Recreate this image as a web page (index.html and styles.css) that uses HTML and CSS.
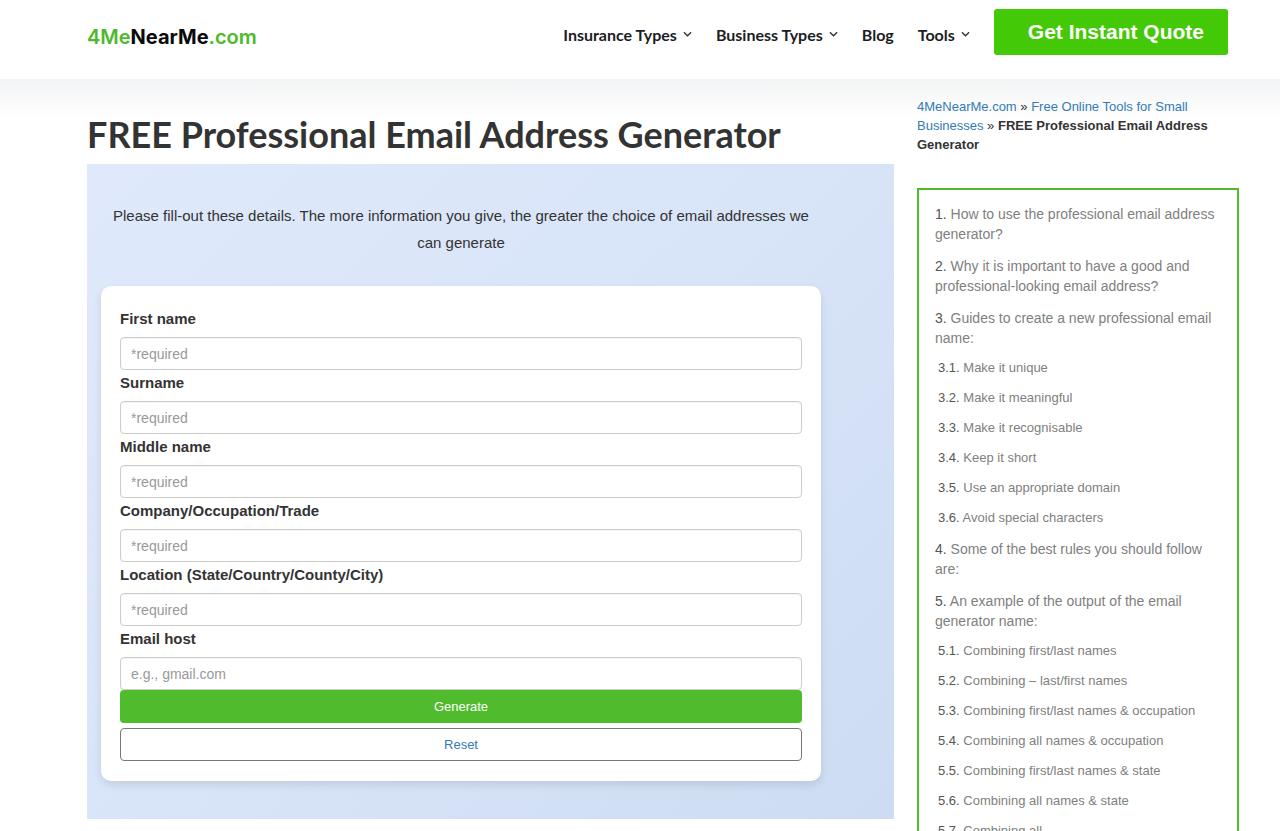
FILE: index.html
```
<!DOCTYPE html>
<html lang="en">
<head>
    <meta charset="UTF-8">
    <meta name="viewport" content="width=device-width, initial-scale=1.0">
    <title>FREE Professional Email Address Generator</title>
    <link rel="stylesheet" href="styles.css">
</head>
<body>
    <header class="site-header">
        <a class="logo" href="#">4Me<span class="logo-dark">NearMe</span><span class="logo-tld">.com</span></a>
        <nav class="main-nav">
            <a href="#">Insurance Types <svg class="caret" viewBox="0 0 10 6"><path d="M1 1l4 4 4-4"/></svg></a>
            <a href="#">Business Types <svg class="caret" viewBox="0 0 10 6"><path d="M1 1l4 4 4-4"/></svg></a>
            <a href="#">Blog</a>
            <a href="#">Tools <svg class="caret" viewBox="0 0 10 6"><path d="M1 1l4 4 4-4"/></svg></a>
            <a class="quote-btn" href="#">Get Instant Quote</a>
        </nav>
    </header>

    <div class="page">
        <main class="content">
            <h1>FREE Professional Email Address Generator</h1>
            <section class="generator">
                <div class="generator-inner">
                    <p class="intro">Please fill-out these details. The more information you give, the greater the choice of email addresses we can generate</p>
                    <form class="card" id="emailForm">
                        <div class="form-group">
                            <label for="firstName">First name</label>
                            <input type="text" id="firstName" placeholder="*required">
                        </div>
                        <div class="form-group">
                            <label for="surname">Surname</label>
                            <input type="text" id="surname" placeholder="*required">
                        </div>
                        <div class="form-group">
                            <label for="middleName">Middle name</label>
                            <input type="text" id="middleName" placeholder="*required">
                        </div>
                        <div class="form-group">
                            <label for="company">Company/Occupation/Trade</label>
                            <input type="text" id="company" placeholder="*required">
                        </div>
                        <div class="form-group">
                            <label for="location">Location (State/Country/County/City)</label>
                            <input type="text" id="location" placeholder="*required">
                        </div>
                        <div class="form-group">
                            <label for="host">Email host</label>
                            <input type="text" id="host" placeholder="e.g., gmail.com">
                        </div>
                        <button type="button" class="btn btn-generate">Generate</button>
                        <button type="reset" class="btn btn-reset">Reset</button>
                    </form>
                </div>
            </section>
        </main>

        <aside class="sidebar">
            <nav class="breadcrumb">
                <a href="#">4MeNearMe.com</a> » <a href="#">Free Online Tools for Small Businesses</a> » <strong>FREE Professional Email Address Generator</strong>
            </nav>
            <nav class="toc">
                <ul>
                    <li><a href="#"><span>1.</span> How to use the professional email address generator?</a></li>
                    <li><a href="#"><span>2.</span> Why it is important to have a good and professional-looking email address?</a></li>
                    <li><a href="#"><span>3.</span> Guides to create a new professional email name:</a>
                        <ul class="toc-sub">
                            <li><a href="#"><span>3.1.</span> Make it unique</a></li>
                            <li><a href="#"><span>3.2.</span> Make it meaningful</a></li>
                            <li><a href="#"><span>3.3.</span> Make it recognisable</a></li>
                            <li><a href="#"><span>3.4.</span> Keep it short</a></li>
                            <li><a href="#"><span>3.5.</span> Use an appropriate domain</a></li>
                            <li><a href="#"><span>3.6.</span> Avoid special characters</a></li>
                        </ul>
                    </li>
                    <li><a href="#"><span>4.</span> Some of the best rules you should follow are:</a></li>
                    <li><a href="#"><span>5.</span> An example of the output of the email generator name:</a>
                        <ul class="toc-sub">
                            <li><a href="#"><span>5.1.</span> Combining first/last names</a></li>
                            <li><a href="#"><span>5.2.</span> Combining – last/first names</a></li>
                            <li><a href="#"><span>5.3.</span> Combining first/last names &amp; occupation</a></li>
                            <li><a href="#"><span>5.4.</span> Combining all names &amp; occupation</a></li>
                            <li><a href="#"><span>5.5.</span> Combining first/last names &amp; state</a></li>
                            <li><a href="#"><span>5.6.</span> Combining all names &amp; state</a></li>
                            <li><a href="#"><span>5.7.</span> Combining all</a></li>
                        </ul>
                    </li>
                </ul>
            </nav>
        </aside>
    </div>
</body>
</html>
```
FILE: styles.css
```
* {
    box-sizing: border-box;
    margin: 0;
    padding: 0;
}

body {
    font-family: "Liberation Sans", Arial, sans-serif;
    font-size: 14px;
    color: #333;
    background-color: white;
}

a {
    color: #337ab7;
    text-decoration: none;
}

ul {
    list-style: none;
}

/* Header */
.site-header {
    display: flex;
    justify-content: space-between;
    align-items: flex-start;
    min-height: 79px;
    padding: 9px 52px 0 87px;
}

.logo {
    font-family: Inter, Arial, sans-serif;
    font-size: 20px;
    font-weight: 600;
    line-height: 24px;
    margin-top: 16px;
    color: #4fb92c;
}

.logo-dark {
    font-weight: 700;
    color: #0a0a0a;
}

.logo-tld {
    font-weight: 600;
}

.main-nav {
    display: flex;
    align-items: center;
    gap: 24px;
}

.main-nav a {
    display: flex;
    align-items: center;
    gap: 6px;
    padding-top: 4px;
    font-family: "Trebuchet MS", Lato, sans-serif;
    font-size: 16px;
    font-weight: bold;
    color: #1d1d1f;
}

.caret {
    width: 9px;
    height: 6px;
    fill: none;
    stroke: #333;
    stroke-width: 1.5;
}

.main-nav .quote-btn {
    padding: 11px 24px 11px 34px;
    border-radius: 3px;
    background-color: #43c905;
    color: white;
    font-family: "Liberation Sans", Arial, sans-serif;
    font-size: 21px;
    line-height: 24px;
}

/* Page columns */
.page {
    display: flex;
    align-items: flex-start;
    gap: 23px;
    padding: 18px 41px 0 87px;
    background: linear-gradient(#f3f4f5, white 42px);
}

.content {
    flex: 1;
    padding-top: 17px;
}

h1 {
    font-family: "Trebuchet MS", Lato, sans-serif;
    font-size: 36px;
    line-height: 40px;
    margin-bottom: 10px;
}

/* Generator */
.generator {
    padding: 38px 14px;
    background: linear-gradient(135deg, #dfe9fb, #d8e4f8 50%, #cddcf2);
}

.generator-inner {
    max-width: 720px;
}

.intro {
    font-size: 15px;
    line-height: 27px;
    margin-bottom: 30px;
    text-align: center;
}

.card {
    padding: 20px 19px;
    border-radius: 10px;
    background-color: white;
    box-shadow: 0 4px 8px rgba(0, 0, 0, 0.1);
}

label {
    display: block;
    margin-bottom: 5px;
    font-size: 15px;
    font-weight: bold;
    line-height: 26px;
}

input {
    display: block;
    width: 100%;
    height: 33px;
    padding: 0 10px;
    border: 1px solid #ccc;
    border-radius: 4px;
    font-family: inherit;
    font-size: 14px;
    color: #333;
    box-shadow: inset 0 1px 1px rgba(0, 0, 0, 0.05);
}

input::placeholder {
    color: #999;
}

.btn {
    display: block;
    width: 100%;
    height: 33px;
    border-radius: 4px;
    font-family: inherit;
    font-size: 13px;
    cursor: pointer;
}

.btn-generate {
    margin-bottom: 5px;
    border: none;
    background-color: #4fbb2d;
    color: white;
}

.btn-reset {
    border: 1px solid #777;
    background-color: white;
    color: #337ab7;
}

/* Sidebar */
.sidebar {
    flex: 0 0 322px;
}

.breadcrumb {
    font-size: 13px;
    line-height: 19px;
    margin-bottom: 34px;
}

.toc {
    padding: 14px 16px;
    border: 2px solid #4fbb2d;
}

.toc li {
    line-height: 20px;
    margin-bottom: 12px;
}

.toc a {
    color: #808080;
}

.toc span {
    color: #555;
}

.toc-sub {
    padding: 11px 0 0 3px;
    font-size: 13px;
}

.toc .toc-sub li {
    line-height: 18px;
}
```
